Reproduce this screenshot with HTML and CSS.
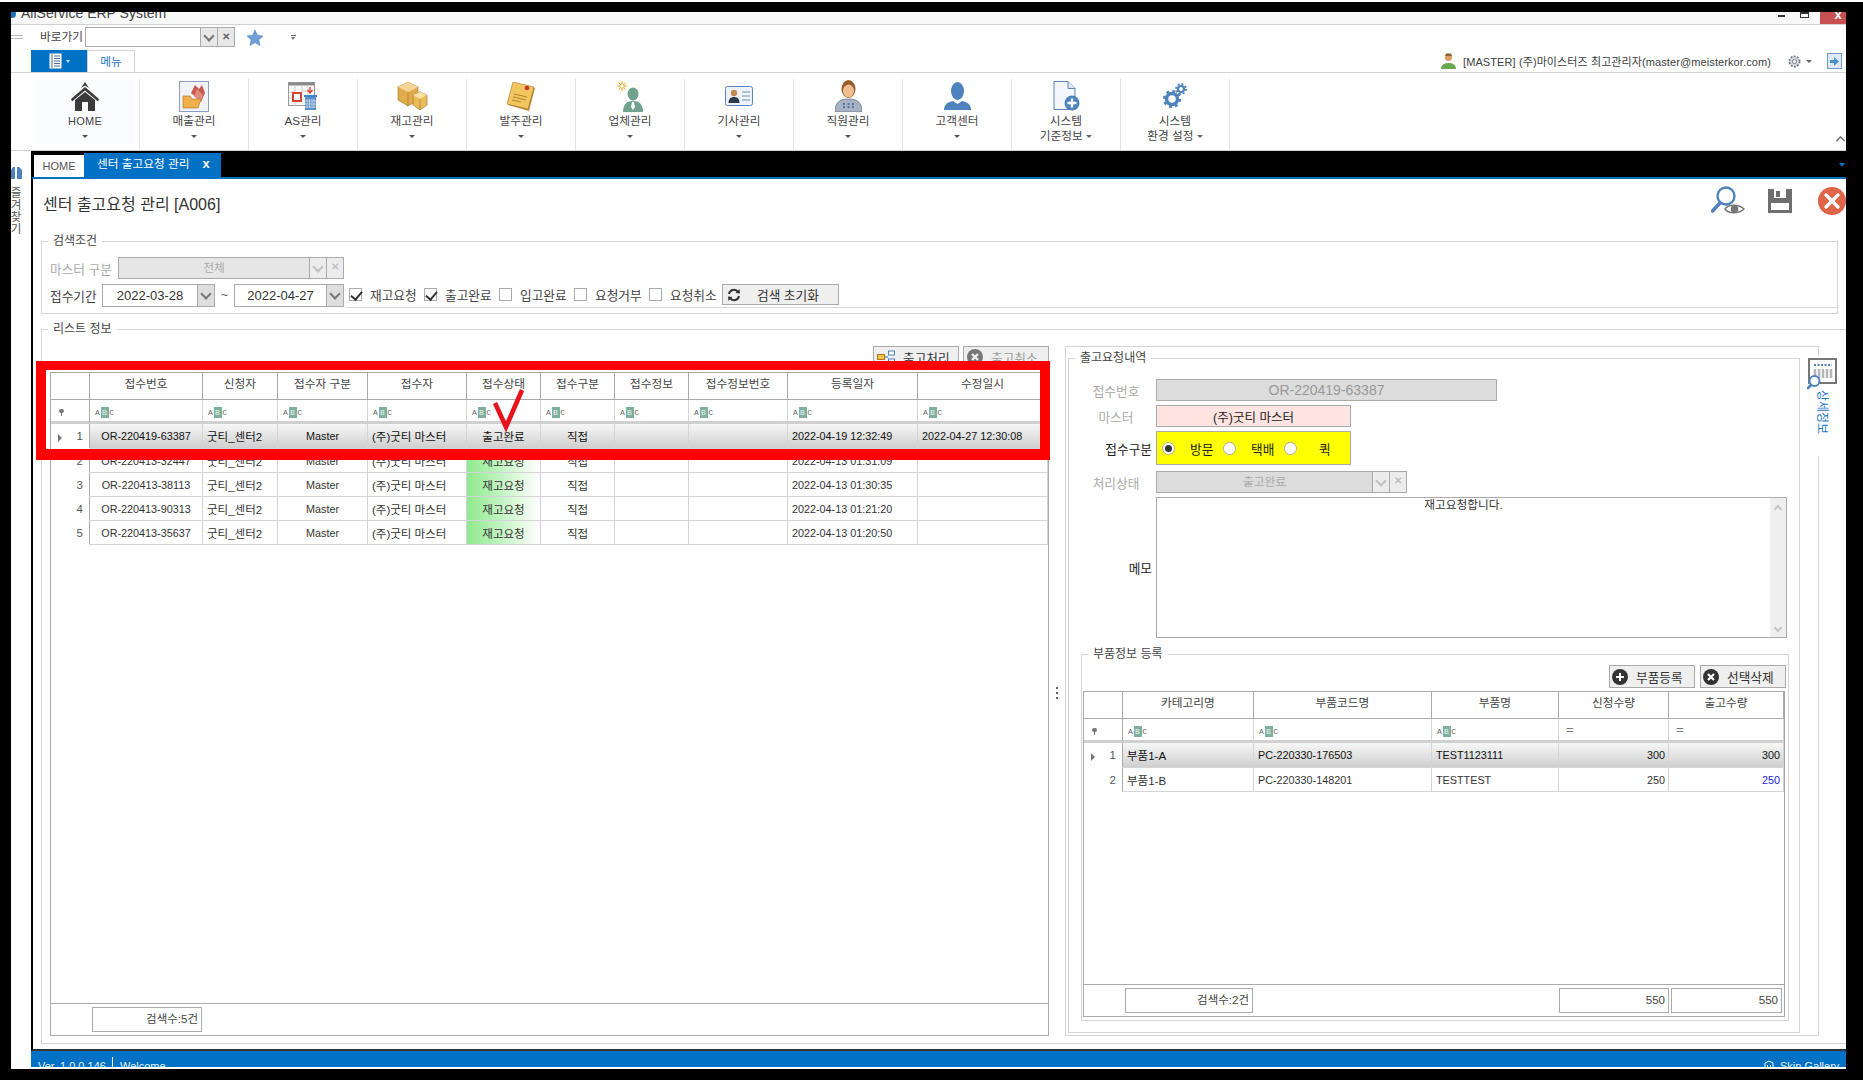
FILE: index.html
```html
<!DOCTYPE html>
<html lang="ko">
<head>
<meta charset="utf-8">
<title>AllService ERP System</title>
<link rel="stylesheet" href="styles.css">
</head>
<body>
<div class="frame">
<div class="app">

  <header class="titlebar">
    <svg class="app-logo" width="6" height="8" viewBox="0 0 6 8"><circle cx="1" cy="3" r="4" fill="#1d6fb8"/></svg>
    <span class="app-name">AllService ERP System</span>
    <span class="win-min"></span>
    <span class="win-restore"></span>
    <span class="win-close">x</span>
  </header>

  <div class="qa-row">
    <span class="qa-grip"></span>
    <span class="qa-label">바로가기</span>
    <div class="qa-combo">
      <span class="combo-text"></span>
      <span class="combo-btn chev"></span>
      <span class="combo-btn combo-x">✕</span>
    </div>
    <svg class="qa-star" width="18" height="18" viewBox="0 0 18 18"><path d="M9 1l2.400 5.400 5.600.6-4.200 3.800 1.200 5.700L9 13.600 4 16.500l1.200-5.700L1 7l5.600-.6z" fill="#6f9fd8" stroke="#4f7fb8" stroke-width=".6"/></svg>
    <span class="qa-more"></span>
  </div>

  <div class="tab-row">
    <span class="file-tab">
      <svg width="13" height="16" viewBox="0 0 13 16"><rect x=".5" y=".5" width="12" height="15" fill="#fff"/><path d="M3 1v14M5 3h6M5 5.500h6M5 8h6M5 10.500h6M5 13h6" stroke="#4a6f90" stroke-width="1"/></svg>
      <i class="file-caret"></i>
    </span>
    <span class="menu-tab">메뉴</span>
    <div class="userbox">
      <svg width="15" height="16" viewBox="0 0 15 16"><circle cx="7.500" cy="4.500" r="3.500" fill="#d9a064"/><path d="M4 3l1-2.500h5L11 3z" fill="#8d6234"/><path d="M0 16c0-4 3-6 7.500-6S15 12 15 16z" fill="#6aa84f"/></svg>
      <span class="user-text">[MASTER] (주)마이스터즈 최고관리자(master@meisterkor.com)</span>
      <svg class="user-gear" width="15" height="15" viewBox="0 0 16 16"><circle cx="8" cy="8" r="5.500" fill="#d5dbe3" stroke="#6a7480" stroke-width="1.800" stroke-dasharray="2 1.500"/><circle cx="8" cy="8" r="2.200" fill="#fff" stroke="#6a7480"/></svg>
      <i class="mini-caret"></i>
      <span class="user-exit"><svg width="9" height="9" viewBox="0 0 9 9"><path d="M0 3h4V0l5 4.500L4 9V6H0z" fill="#4f8fd0"/></svg></span>
    </div>
  </div>

  <nav class="ribbon">
    <div class="rb-item rb-home">
      <span class="rb-icon"><svg width="28" height="29" viewBox="0 0 28 29"><path d="M14 0l-4 6 4-2.500L18 6zM0 17L14 5l14 12-1 2.500L14 8.500 1 19.500z" fill="#3a3a3a"/><path d="M4 18L14 10l10 8v11h-7v-9h-6v9H4z" fill="#3a3a3a"/></svg></span>
      <span class="rb-label rb-latin">HOME</span>
      <i class="rb-caret"></i>
    </div>
    <div class="rb-item">
      <span class="rb-icon"><svg width="30" height="31" viewBox="0 0 30 31"><rect x=".5" y=".5" width="29" height="30" fill="#f1f3fa" stroke="#8d9dc4"/><path d="M12 12l4-8 4 4 3-4 3 8-4 9z" fill="#c9594f"/><path d="M15 15l3-7 6 6-2 7z" fill="#e08a80"/><path d="M4 15h7l2 3h9l-3 9H4z" fill="#f0b04e" stroke="#b57a22" stroke-width=".7"/></svg></span>
      <span class="rb-label">매출관리</span>
      <i class="rb-caret"></i>
    </div>
    <div class="rb-item">
      <span class="rb-icon"><svg width="30" height="28" viewBox="0 0 30 28"><rect x=".5" y=".5" width="26" height="23" fill="#fafafa" stroke="#999"/><rect x=".5" y=".5" width="26" height="3" fill="#8a8a8a"/><path d="M7 4v20M14 4v8M20 4v8M1 10h6M1 16h6M14 9h12" stroke="#ccc"/><rect x="5" y="11" width="8" height="8" fill="#fff" stroke="#d8452c" stroke-width="2"/><path d="M22 5v5m-2.500-2l2.500 3 2.500-3" stroke="#d8452c" fill="none" stroke-width="1.300"/><rect x="16" y="13" width="13" height="2" fill="#3f83c4"/><rect x="17" y="15" width="11" height="13" fill="#5c90c6"/><path d="M19 17v9M21.500 17v9M24 17v9M26 17v9M17 19h11M17 22h11M17 25h11" stroke="#d3e3f2" stroke-width=".7"/></svg></span>
      <span class="rb-label">AS관리</span>
      <i class="rb-caret"></i>
    </div>
    <div class="rb-item">
      <span class="rb-icon"><svg width="31" height="28" viewBox="0 0 31 28"><path d="M1 5l10-5 10 5v13l-10 6-10-6z" fill="#e0ab4a" stroke="#9b7226" stroke-width=".6"/><path d="M1 5l10 5 10-5-10-5z" fill="#f5d694"/><path d="M11 10v14" stroke="#9b7226" stroke-width=".6"/><path d="M16 13l7-3 7 3v10l-7 5-7-5z" fill="#eab95a" stroke="#9b7226" stroke-width=".6"/><path d="M16 13l7 4 7-4-7-3z" fill="#f8dfa4"/><path d="M23 17v11" stroke="#9b7226" stroke-width=".6"/></svg></span>
      <span class="rb-label">재고관리</span>
      <i class="rb-caret"></i>
    </div>
    <div class="rb-item">
      <span class="rb-icon"><svg width="28" height="29" viewBox="0 0 28 29"><path d="M7 1l21 5-6 23L1 23z" fill="#b98a3c"/><path d="M6 0l21 5-6 22L0 22z" fill="#f2c55f" stroke="#a8792a" stroke-width=".6"/><path d="M7 12l13 3M6 15l13 3M5 18l9 2" stroke="#a8792a" stroke-width=".9"/><circle cx="20" cy="6" r="2.300" fill="#c8342c"/></svg></span>
      <span class="rb-label">발주관리</span>
      <i class="rb-caret"></i>
    </div>
    <div class="rb-item">
      <span class="rb-icon"><svg width="27" height="31" viewBox="0 0 27 31"><g stroke="#e8b22e" stroke-width="1"><path d="M5 0v10M0 5h10M1.500 1.500l7 7M8.500 1.500l-7 7"/></g><circle cx="5" cy="5" r="2.300" fill="#fff" stroke="#e8b22e"/><ellipse cx="16" cy="13" rx="5.500" ry="6.500" fill="#6fa38e"/><path d="M6 31c0-8 4-11 10-11s10 3 10 11z" fill="#6fa38e"/><path d="M15 21h2l1 5-2 3-2-3z" fill="#fff"/></svg></span>
      <span class="rb-label">업체관리</span>
      <i class="rb-caret"></i>
    </div>
    <div class="rb-item">
      <span class="rb-icon"><svg width="28" height="20" viewBox="0 0 28 20"><rect x=".5" y=".5" width="27" height="19" rx="2" fill="#eef3fb" stroke="#5a86bd"/><circle cx="9" cy="7" r="3.200" fill="#c58a50"/><path d="M3.500 17c0-4 2-6 5.500-6s5.500 2 5.500 6z" fill="#2d3a4a"/><path d="M17 6h8M17 10h8M17 14h8" stroke="#6a8fb8" stroke-width="1.200"/></svg></span>
      <span class="rb-label">기사관리</span>
      <i class="rb-caret"></i>
    </div>
    <div class="rb-item">
      <span class="rb-icon"><svg width="27" height="32" viewBox="0 0 27 32"><ellipse cx="13.500" cy="9" rx="7" ry="9" fill="#9a5b2a"/><ellipse cx="13.500" cy="11" rx="5.500" ry="6.500" fill="#efbd90"/><path d="M0 32c0-9 4-13 13.500-13S27 23 27 32z" fill="#a7b3c4" stroke="#5f6b7c" stroke-width=".7"/><path d="M9 23v5M13.500 23v5M18 23v5" stroke="#5878a8" stroke-width="2" stroke-dasharray="2 1"/></svg></span>
      <span class="rb-label">직원관리</span>
      <i class="rb-caret"></i>
    </div>
    <div class="rb-item">
      <span class="rb-icon"><svg width="27" height="28" viewBox="0 0 27 28"><ellipse cx="13.500" cy="9" rx="6.500" ry="9" fill="#4d82bd"/><path d="M0 28c0-5 3-8 9-9l4.500 3 4.500-3c6 1 9 4 9 9z" fill="#4d82bd"/></svg></span>
      <span class="rb-label">고객센터</span>
      <i class="rb-caret"></i>
    </div>
    <div class="rb-item">
      <span class="rb-icon"><svg width="27" height="30" viewBox="0 0 27 30"><path d="M1 .5h14l7 7v21H1z" fill="#f3f6fc" stroke="#5a86bd"/><path d="M15 .5v7h7" fill="#dfe8f5" stroke="#5a86bd"/><circle cx="19" cy="22" r="7.500" fill="#4d82bd"/><path d="M19 17.500v9M14.500 22h9" stroke="#fff" stroke-width="2.400"/></svg></span>
      <span class="rb-label">시스템</span>
      <span class="rb-label">기준정보 <i class="mini-caret"></i></span>
    </div>
    <div class="rb-item">
      <span class="rb-icon"><svg width="24" height="26" viewBox="0 0 24 26"><circle cx="9" cy="16" r="5.500" fill="none" stroke="#4d82bd" stroke-width="3.500"/><circle cx="9" cy="16" r="8" fill="none" stroke="#4d82bd" stroke-width="2.200" stroke-dasharray="3 3.300"/><circle cx="18" cy="6" r="3" fill="none" stroke="#4d82bd" stroke-width="2.200"/><circle cx="18" cy="6" r="5" fill="none" stroke="#4d82bd" stroke-width="1.800" stroke-dasharray="2 1.900"/></svg></span>
      <span class="rb-label">시스템</span>
      <span class="rb-label">환경 설정 <i class="mini-caret"></i></span>
    </div>
    <svg class="ribbon-collapse" width="9" height="6" viewBox="0 0 9 6"><path d="M.5 5l4-4 4 4" fill="none" stroke="#777" stroke-width="1.600"/></svg>
  </nav>

  <div class="main">
    <aside class="rail">
      <svg width="11" height="13" viewBox="0 0 11 13"><path d="M0 13V4l2-3h2v12zM6 13V1h2l3 3v9z" fill="#4d82bd"/></svg>
      <span class="rail-text">즐겨찾기</span>
    </aside>

    <div class="workspace">
      <div class="doc-tabs">
        <span class="doc-home">HOME</span>
        <span class="doc-active">센터 출고요청 관리<b class="doc-x">x</b></span>
        <i class="doc-pin"></i>
      </div>

      <main class="content">
        <div class="page-head">
          <h1 class="page-title">센터 출고요청 관리 [A006]</h1>
          <div class="page-actions">
            <svg width="34" height="30" viewBox="0 0 34 30"><circle cx="15" cy="10" r="8.500" fill="none" stroke="#4d82bd" stroke-width="2.400"/><path d="M9 17L1.500 25" stroke="#4d82bd" stroke-width="3.400" stroke-linecap="round"/><path d="M14 23c3-5 14-5 19 0-5 5-16 5-19 0z" fill="#fff" stroke="#777" stroke-width="1.500"/><circle cx="23.500" cy="23" r="3.800" fill="#777"/></svg>
            <svg class="act-save" width="24" height="24" viewBox="0 0 24 24"><path d="M0 0h24v24H0z" fill="#6f6f6f"/><path d="M6 0h12v9H6z" fill="#fff"/><path d="M8 2h4v6H8z" fill="#6f6f6f"/><path d="M3 14h18v7H3z" fill="#fff"/></svg>
            <svg class="act-close" width="28" height="28" viewBox="0 0 28 28"><circle cx="14" cy="14" r="14" fill="#df6448"/><path d="M8 8l12 12M20 8L8 20" stroke="#fff" stroke-width="3.400" stroke-linecap="round"/></svg>
          </div>
        </div>

        <fieldset class="group search-group">
          <legend>검색조건</legend>
          <div class="s-row">
            <span class="s-label s-master">마스터 구분</span>
            <div class="box disabled master-combo">
              <span class="combo-text center">전체</span>
              <span class="combo-btn chev"></span>
              <span class="combo-btn combo-x">✕</span>
            </div>
          </div>
          <div class="s-row">
            <span class="s-label-on s-period">접수기간</span>
            <div class="box date date-a"><span class="combo-text center">2022-03-28</span><span class="combo-btn chev dark"></span></div>
            <span class="tilde">~</span>
            <div class="box date date-b"><span class="combo-text center">2022-04-27</span><span class="combo-btn chev dark"></span></div>
            <div class="checks">
              <span class="chk on"></span><span class="chk-text">재고요청</span>
              <span class="chk on"></span><span class="chk-text">출고완료</span>
              <span class="chk"></span><span class="chk-text">입고완료</span>
              <span class="chk"></span><span class="chk-text">요청거부</span>
              <span class="chk"></span><span class="chk-text">요청취소</span>
              <span class="btn reset-btn">
                <svg width="14" height="14" viewBox="0 0 14 14"><path d="M2 6a5 5 0 0 1 9-2M12 8a5 5 0 0 1-9 2" fill="none" stroke="#333" stroke-width="2"/><path d="M8.500 5L13 5.500 12.500 1zM5.500 9L1 8.500 1.500 13z" fill="#333"/></svg>
                <span class="btn-text">검색 초기화</span>
              </span>
            </div>
          </div>
        </fieldset>

        <fieldset class="group list-group">
          <legend>리스트 정보</legend>
          <div class="list-left">
            <div class="toolbar">
              <span class="btn tool-btn">
                <svg width="18" height="14" viewBox="0 0 18 14"><rect x=".5" y="4.500" width="7" height="5" fill="#f4c542" stroke="#b5761d"/><path d="M8 7h3" stroke="#1d6fb8"/><rect x="11.500" y="1" width="6" height="4" fill="#fff" stroke="#4d82bd"/><rect x="11.500" y="9" width="6" height="4" fill="#fff" stroke="#4d82bd"/></svg>
                <span class="btn-text">출고처리</span>
              </span>
              <span class="btn tool-btn off">
                <svg width="16" height="16" viewBox="0 0 16 16"><circle cx="8" cy="8" r="8" fill="#777"/><path d="M5 5l6 6M11 5l-6 6" stroke="#eee" stroke-width="2.400"/></svg>
                <span class="btn-text">출고취소</span>
              </span>
            </div>

            <div class="grid-wrap grid-main">
              <div class="dg">
                <table class="dt">
                  <colgroup><col class="m0"><col class="m1"><col class="m2"><col class="m3"><col class="m4"><col class="m5"><col class="m6"><col class="m7"><col class="m8"><col class="m9"><col class="m10"></colgroup>
                  <tr class="hd"><th></th><th>접수번호</th><th>신청자</th><th>접수자 구분</th><th>접수자</th><th>접수상태</th><th>접수구분</th><th>접수정보</th><th>접수정보번호</th><th>등록일자</th><th>수정일시</th></tr>
                  <tr class="ft"><td class="ind"><i class="pin"></i></td><td><span class="abc">A<b>B</b>C</span></td><td><span class="abc">A<b>B</b>C</span></td><td><span class="abc">A<b>B</b>C</span></td><td><span class="abc">A<b>B</b>C</span></td><td><span class="abc">A<b>B</b>C</span></td><td><span class="abc">A<b>B</b>C</span></td><td><span class="abc">A<b>B</b>C</span></td><td><span class="abc">A<b>B</b>C</span></td><td><span class="abc">A<b>B</b>C</span></td><td><span class="abc">A<b>B</b>C</span></td></tr>
                  <tr class="r1 sel"><td class="ind"><i class="arrow"></i>1</td><td class="ctr">OR-220419-63387</td><td class="kr">굿티_센터2</td><td class="ctr">Master</td><td class="kr">(주)굿티 마스터</td><td class="ctr kr">출고완료</td><td class="ctr kr">직접</td><td></td><td></td><td>2022-04-19 12:32:49</td><td>2022-04-27 12:30:08</td></tr>
                  <tr class="r"><td class="ind">2</td><td class="ctr">OR-220413-32447</td><td class="kr">굿티_센터2</td><td class="ctr">Master</td><td class="kr">(주)굿티 마스터</td><td class="ctr kr st">재고요청</td><td class="ctr kr">직접</td><td></td><td></td><td>2022-04-13 01:31:09</td><td></td></tr>
                  <tr class="r"><td class="ind">3</td><td class="ctr">OR-220413-38113</td><td class="kr">굿티_센터2</td><td class="ctr">Master</td><td class="kr">(주)굿티 마스터</td><td class="ctr kr st">재고요청</td><td class="ctr kr">직접</td><td></td><td></td><td>2022-04-13 01:30:35</td><td></td></tr>
                  <tr class="r"><td class="ind">4</td><td class="ctr">OR-220413-90313</td><td class="kr">굿티_센터2</td><td class="ctr">Master</td><td class="kr">(주)굿티 마스터</td><td class="ctr kr st">재고요청</td><td class="ctr kr">직접</td><td></td><td></td><td>2022-04-13 01:21:20</td><td></td></tr>
                  <tr class="r"><td class="ind">5</td><td class="ctr">OR-220413-35637</td><td class="kr">굿티_센터2</td><td class="ctr">Master</td><td class="kr">(주)굿티 마스터</td><td class="ctr kr st">재고요청</td><td class="ctr kr">직접</td><td></td><td></td><td>2022-04-13 01:20:50</td><td></td></tr>
                </table>
              </div>
              <div class="dg-foot foot-main">
                <span class="sum sum-count">검색수:5건</span>
              </div>
              <div class="redbox">
                <svg class="redcheck" width="34" height="44" viewBox="0 0 34 44"><path d="M3 15l11 24L30 2" fill="none" stroke="#e8121a" stroke-width="4.600" stroke-linejoin="miter"/></svg>
              </div>
            </div>
          </div>

          <div class="splitter"><i></i><i></i><i></i></div>

          <section class="detail">
            <fieldset class="group detail-group">
              <legend>출고요청내역</legend>
              <div class="f-row f-r1">
                <span class="f-label">접수번호</span>
                <span class="box ro ro-no">OR-220419-63387</span>
              </div>
              <div class="f-row f-r2">
                <span class="f-label">마스터</span>
                <span class="box pink">(주)굿티 마스터</span>
              </div>
              <div class="f-row f-r3">
                <span class="f-label on">접수구분</span>
                <div class="box yellow">
                  <span class="radio checked"></span><span class="rd-text t1">방문</span>
                  <span class="radio"></span><span class="rd-text t2">택배</span>
                  <span class="radio"></span><span class="rd-text t3">퀵</span>
                </div>
              </div>
              <div class="f-row f-r4">
                <span class="f-label">처리상태</span>
                <div class="box disabled status-combo">
                  <span class="combo-text center">출고완료</span>
                  <span class="combo-btn chev"></span>
                  <span class="combo-btn combo-x">✕</span>
                </div>
              </div>
              <div class="f-row f-r5">
                <span class="f-label on">메모</span>
                <div class="box memo">
                  <div class="memo-text">재고요청합니다.</div>
                  <div class="memo-scroll"><span class="sc-up"></span><span class="sc-down"></span></div>
                </div>
              </div>

              <fieldset class="group parts-group">
                <legend>부품정보 등록</legend>
                <div class="parts-tools">
                  <span class="btn part-btn">
                    <svg width="16" height="16" viewBox="0 0 16 16"><circle cx="8" cy="8" r="8" fill="#333"/><path d="M8 4v8M4 8h8" stroke="#fff" stroke-width="2"/></svg>
                    <span class="btn-text">부품등록</span>
                  </span>
                  <span class="btn part-btn">
                    <svg width="16" height="16" viewBox="0 0 16 16"><circle cx="8" cy="8" r="8" fill="#333"/><path d="M5 5l6 6M11 5l-6 6" stroke="#fff" stroke-width="2.200"/></svg>
                    <span class="btn-text">선택삭제</span>
                  </span>
                </div>
                <div class="grid-wrap grid-parts">
                  <div class="dg">
                    <table class="dt">
                      <colgroup><col class="p0"><col class="p1"><col class="p2"><col class="p3"><col class="p4"><col class="p5"></colgroup>
                      <tr class="hd"><th></th><th>카테고리명</th><th>부품코드명</th><th>부품명</th><th>신청수량</th><th>출고수량</th></tr>
                      <tr class="ft"><td class="ind"><i class="pin"></i></td><td><span class="abc">A<b>B</b>C</span></td><td><span class="abc">A<b>B</b>C</span></td><td><span class="abc">A<b>B</b>C</span></td><td><span class="eq">=</span></td><td><span class="eq">=</span></td></tr>
                      <tr class="r1 sel"><td class="ind"><i class="arrow"></i>1</td><td class="kr">부품1-A</td><td>PC-220330-176503</td><td>TEST1123111</td><td class="num">300</td><td class="num">300</td></tr>
                      <tr class="r"><td class="ind">2</td><td class="kr">부품1-B</td><td>PC-220330-148201</td><td>TESTTEST</td><td class="num">250</td><td class="num blue">250</td></tr>
                    </table>
                  </div>
                  <div class="dg-foot foot-parts">
                    <span class="sum sum-parts">검색수:2건</span>
                    <span class="sum sum-q1">550</span>
                    <span class="sum sum-q2">550</span>
                  </div>
                </div>
              </fieldset>
            </fieldset>

            <div class="sidetab">
              <svg width="30" height="32" viewBox="0 0 30 32"><rect x="2" y="1" width="27" height="24" fill="#fff" stroke="#777" stroke-width="2"/><path d="M7 7h18" stroke="#4d82bd" stroke-width="2" stroke-dasharray="2 1.500"/><path d="M8 11v9M12 11v9M16 11v9M20 11v9M24 11v9" stroke="#b5b5b5" stroke-width="2.500"/><circle cx="7.500" cy="23" r="5" fill="#fff" stroke="#4d82bd" stroke-width="2"/><path d="M4 27l-3 3" stroke="#4d82bd" stroke-width="2.600" stroke-linecap="round"/></svg>
              <span class="sidetab-text">상세정보</span>
            </div>
          </section>
        </fieldset>
      </main>

      <footer class="statusbar">
        <span class="ver">Ver. 1.0.0.146</span>
        <span class="st-welcome">Welcome</span>
        <svg class="skin-icon" width="10" height="12" viewBox="0 0 10 12"><path d="M1 3l4-2 4 2v9H1zM3.500 5v7M6.500 5v7" fill="none" stroke="#fff"/></svg>
        <span class="skin">Skin Gallery</span>
      </footer>
    </div>
  </div>
</div>
</div>
</body>
</html>
```
FILE: styles.css
```css
* { box-sizing: border-box; }
html, body { margin: 0; padding: 0; background: #fff; }
body {
  width: 1863px;
  height: 1080px;
  overflow: hidden;
  font-family: "Liberation Sans", "Noto Sans CJK KR", sans-serif;
  font-size: 11px;
  color: #333;
  padding-top: 2px;
}
i { font-style: normal; }

.frame {
  height: 1078px;
  background: #000;
  padding: 10px 17px 11px 11px;
}
.app {
  width: 1835px;
  height: 1057px;
  background: #fff;
  display: flex;
  flex-direction: column;
  overflow: hidden;
}

/* title bar */
.titlebar {
  flex: 0 0 13px;
  height: 13px;
  background: #f8f8f8;
  border-bottom: 1px solid #d2d2d2;
  display: flex;
  align-items: flex-end;
  padding-bottom: 3px;
  overflow: hidden;
}
.app-logo { flex: none; margin-right: 4px; margin-bottom: 2px; }
.app-name { font-size: 14px; line-height: 16px; color: #444; }
.win-min { width: 7px; height: 2px; background: #333; margin-left: auto; margin-bottom: 4px; }
.win-restore { width: 9px; height: 6px; border: 1px solid #333; border-top-width: 2px; margin-left: 15px; margin-right: 11px; margin-bottom: 3px; }
.win-close {
  width: 26px;
  height: 12px;
  margin-bottom: -3px;
  padding-left: 10px;
  background: #c75050;
  color: #fff;
  font-weight: bold;
  font-size: 13px;
  line-height: 6px;
  text-align: center;
}

/* quick access */
.qa-row {
  flex: 0 0 25px;
  display: flex;
  align-items: center;
}
.qa-grip { width: 12px; height: 4px; border-top: 1px solid #bbb; border-bottom: 1px solid #bbb; margin-right: 17px; margin-top: -1px; }
.qa-label { width: 45px; font-size: 11.700px; color: #444; white-space: nowrap; margin-top: -4px; }
.qa-combo {
  width: 150px;
  height: 20px;
  border: 1px solid #aaa;
  display: flex;
  margin-top: -1px;
}
.combo-text { flex: 1; }
.center { text-align: center; }
.combo-btn {
  width: 17px;
  flex: none;
  background: #e8e8e8;
  border-left: 1px solid #aaa;
  color: #666;
  font-size: 10px;
  font-weight: bold;
  text-align: center;
}
.chev { display: flex; align-items: center; justify-content: center; }
.chev::before {
  content: "";
  width: 6px;
  height: 6px;
  border: solid #777;
  border-width: 0 2px 2px 0;
  transform: rotate(45deg);
  margin-top: -3px;
}
.combo-x { line-height: 18px; }
.qa-star { margin-left: 11px; }
.qa-more { width: 5px; height: 4px; margin-left: 27px; margin-top: -2px; border-top: 1px solid #666; position: relative; }
.qa-more::after { content: ""; position: absolute; left: 0; top: 1px; border: 2.500px solid transparent; border-top: 3px solid #777; border-bottom: 0; }

/* tabs row */
.tab-row {
  flex: 0 0 23px;
  display: flex;
  align-items: stretch;
  padding-left: 20px;
  border-bottom: 1px solid #d2d2d2;
  overflow: hidden;
}
.file-tab {
  width: 56px;
  background: #0071c5;
  display: flex;
  align-items: center;
  justify-content: center;
  gap: 4px;
}
.file-caret { width: 0; height: 0; border: 2px solid transparent; border-top: 3px solid #cfe3f5; border-bottom: 0; }
.menu-tab {
  width: 48px;
  border: 1px solid #d2d2d2;
  border-bottom: 0;
  color: #1b78c6;
  font-size: 11.700px;
  text-align: center;
  line-height: 21px;
  margin-bottom: -1px;
  background: #fff;
}
.userbox {
  margin-left: auto;
  display: flex;
  align-items: center;
  padding-right: 4px;
}
.user-text { font-size: 11px; color: #3d3d3d; margin-left: 7px; width: 307px; white-space: nowrap; letter-spacing: .1px; }
.user-gear { margin-left: 17px; }
.mini-caret { display: inline-block; width: 0; height: 0; border: 3px solid transparent; border-top: 3px solid #666; border-bottom: 0; vertical-align: middle; }
.userbox .mini-caret { margin-left: 4px; }
.user-exit {
  width: 15px;
  height: 16px;
  margin-left: 15px;
  background: #dfeaf7;
  border: 1px solid #6f9bcb;
  display: flex;
  align-items: center;
  justify-content: center;
}

/* ribbon */
.ribbon {
  flex: 0 0 78px;
  display: flex;
  padding-left: 20px;
  border-bottom: 1px solid #d2d2d2;
  position: relative;
}
.rb-item {
  width: 109px;
  height: 71px;
  margin-top: 6px;
  border-right: 1px solid #e2e2e2;
  display: flex;
  flex-direction: column;
  align-items: center;
}
.rb-home { background: linear-gradient(#fbfcff, #fbfcff) 4px 0 / 100px 65px no-repeat; }
.rb-icon { height: 34px; display: flex; align-items: center; justify-content: center; }
.rb-label { font-size: 11.700px; line-height: 15px; color: #444; white-space: nowrap; }
.rb-latin { font-size: 11px; letter-spacing: .3px; line-height: 17px; }
.rb-caret { width: 0; height: 0; border: 3px solid transparent; border-top: 3px solid #555; border-bottom: 0; margin-top: 7px; }
.rb-latin + .rb-caret { margin-top: 5px; }
.ribbon-collapse { position: absolute; right: 1px; top: 63px; }

/* main */
.main { flex: 1; display: flex; min-height: 0; }
.rail {
  width: 20px;
  flex: none;
  display: flex;
  flex-direction: column;
  align-items: flex-start;
  padding-top: 15px;
  overflow: hidden;
}
.rail-text {
  writing-mode: vertical-rl;
  text-orientation: upright;
  font-size: 11.500px;
  letter-spacing: .5px;
  color: #555;
  margin: 8px 0 0 -3px;
  line-height: 14px;
}
.workspace { width: 1815px; display: flex; flex-direction: column; min-width: 0; }
.doc-tabs {
  flex: 0 0 26px;
  background: #000;
  display: flex;
  align-items: flex-end;
  padding-left: 3px;
  position: relative;
}
.doc-home {
  width: 50px;
  height: 22px;
  background: #fff;
  color: #555;
  font-size: 11px;
  line-height: 23px;
  text-align: center;
}
.doc-active {
  width: 137px;
  height: 24px;
  background: #0071c5;
  color: #fff;
  font-size: 11.700px;
  line-height: 22px;
  padding-left: 13px;
  white-space: nowrap;
}
.doc-x { font-size: 13px; margin-left: 13px; }
.doc-pin { position: absolute; right: 1px; top: 12px; border: 3px solid transparent; border-top: 4px solid #0071c5; }

.content {
  flex: 0 0 874px;
  height: 874px;
  border-top: 2px solid #0071c5;
  border-left: 2px solid #000;
  border-bottom: 2px solid #333;
  background: #fff;
  overflow: hidden;
  min-height: 0;
}
.page-head {
  height: 55px;
  padding: 7px 0 0 10px;
  display: flex;
  justify-content: space-between;
  align-items: flex-start;
}
.page-title { margin: 9px 0 0; font-size: 16px; font-weight: normal; line-height: 20px; color: #333; }
.page-actions { display: flex; align-items: center; height: 30px; }
.act-save { margin-left: 23px; }
.act-close { margin-left: 26px; }

/* groups */
.group {
  margin: 0;
  min-width: 0;
  padding: 0;
  border: 1px solid #d4d4d4;
}
.group > legend {
  padding: 0 5px;
  font-size: 12px;
  line-height: 14px;
  color: #444;
}
.search-group > legend, .list-group > legend { margin-left: -2px; }
.detail-group > legend { margin-left: 5px; }
.parts-group > legend { margin-left: 5px; }
.search-group {
  margin: 0 8px 8px 8px;
  height: 80px;
  padding: 9px 0 0 8px;
}
.s-row { display: flex; align-items: center; height: 22px; }
.s-row + .s-row { margin-top: 5px; }
.s-label { color: #aaa; font-size: 12.700px; white-space: nowrap; }
.s-label-on { color: #444; font-size: 12.700px; white-space: nowrap; }
.s-master { width: 68px; }
.s-period { width: 52px; }
.box { border: 1px solid #aaa; display: flex; }
.disabled { background: #e6e6e6; color: #aaa; }
.master-combo { width: 226px; height: 22px; font-size: 11.700px; line-height: 20px; }
.combo-text { font-size: inherit; }
.master-combo .combo-btn, .status-combo .combo-btn { color: #c0c0c0; background: #ececec; }
.master-combo .chev::before, .status-combo .chev::before { border-color: #c0c0c0; }
.date { height: 23px; font-size: 13px; line-height: 21px; background: #fff; color: #333; }
.date-a { width: 113px; }
.date-b { width: 110px; }
.dark { background: #dedede; color: #666; }
.tilde { width: 19px; text-align: center; color: #555; font-size: 12px; }
.checks {
  flex: 1;
  height: 24px;
  display: flex;
  align-items: center;
  border-bottom: 1px solid #d8d8d8;
  margin-left: 2px;
  padding-left: 3px;
  margin-top: 2px;
  padding-bottom: 2px;
}
.chk {
  width: 13px;
  height: 13px;
  border: 1px solid #aaa;
  background: #fff;
  position: relative;
  flex: none;
}
.chk.on::after {
  content: "";
  position: absolute;
  left: 3px;
  top: 0;
  width: 5px;
  height: 9px;
  border: solid #333;
  border-width: 0 2px 2px 0;
  transform: rotate(40deg);
}
.chk-text { width: 62px; padding-left: 8px; font-size: 12.700px; white-space: nowrap; color: #444; }
.btn {
  display: flex;
  align-items: center;
  background: #efefef;
  border: 1px solid #aaa;
  color: #333;
  font-size: 12.700px;
  white-space: nowrap;
}
.reset-btn { width: 117px; height: 21px; margin-left: -2px; padding-left: 4px; }
.reset-btn .btn-text { margin-left: 16px; }

.list-group {
  width: 1813px;
  height: 722px;
  margin-left: 8px;
  padding: 10px 0 0 8px;
  display: flex;
  align-items: flex-start;
}
.list-left { width: 999px; flex: none; }
.toolbar { display: flex; justify-content: flex-end; gap: 4px; height: 26px; }
.tool-btn { width: 86px; height: 22px; padding-left: 3px; }
.tool-btn .btn-text { margin-left: 8px; }
.tool-btn.off { color: #999; padding-left: 3px; }

/* data grids */
.grid-wrap {
  position: relative;
  border: 1px solid #aaa;
  display: flex;
  flex-direction: column;
  background: #fff;
}
.grid-main { height: 664px; }
.dg { flex: 1; border-bottom: 1px solid #aaa; min-height: 0; }
.dt { border-collapse: separate; border-spacing: 0; table-layout: fixed; width: 100%; }
.m0 { width: 39px; } .m1 { width: 113px; } .m2 { width: 75px; } .m3 { width: 90px; }
.m4 { width: 99px; } .m5 { width: 74px; } .m6 { width: 74px; } .m7 { width: 74px; }
.m8 { width: 99px; } .m9 { width: 130px; } .m10 { width: 130px; }
.p0 { width: 39px; } .p1 { width: 131px; } .p2 { width: 178px; } .p3 { width: 127px; } .p4 { width: 110px; } .p5 { width: 115px; }
.dt th, .dt td { padding: 0; overflow: hidden; white-space: nowrap; }
.hd th {
  height: 27px;
  font-weight: normal;
  font-size: 11.700px;
  color: #444;
  border-right: 1px solid #aaa;
  border-bottom: 1px solid #aaa;
  padding-bottom: 8px;
}
.ft td {
  height: 24px;
  border-right: 1px solid #d4d4d4;
  border-bottom: 3px solid #d0d0d0;
  padding-left: 5px;
}
.r td, .r1 td {
  font-size: 10.800px;
  color: #333;
  padding-left: 4px;
  border-right: 1px solid #d4d4d4;
  border-bottom: 1px solid #d4d4d4;
}
.r td { height: 24px; }
.r1 td { height: 25px; }
.r1 td { color: #111; }
.sel td:not(.ind) { background: linear-gradient(#f7f7f7, #cfcfcf); }
.dt td.ind {
  text-align: right;
  padding-right: 6px;
  color: #555;
  font-size: 11.500px;
  border-right: 1px solid #aaa;
  border-bottom-color: transparent;
  background: #fff;
}
.dt .ft td.ind { border-bottom: 3px solid #d0d0d0; text-align: left; padding-left: 8px; }
.dt td.ctr { text-align: center; padding-left: 0; }
.kr { font-size: 11.500px !important; }
.st { background: linear-gradient(to right, #8eea8e, #fff); }
.num { text-align: right; padding-right: 3px !important; }
.blue { color: #1a1ae0 !important; }
.arrow {
  float: left;
  margin: 4px 0 0 3px;
  width: 0;
  height: 0;
  border: 4px solid transparent;
  border-left: 4px solid #777;
  border-right: 0;
}
.pin {
  display: inline-block;
  width: 5px;
  height: 4px;
  border-radius: 3px;
  background: #777;
  position: relative;
  vertical-align: 2px;
}
.pin::after { content: ""; position: absolute; left: 2px; top: 3px; width: 1px; height: 4px; background: #777; }
.abc { font-family: "Liberation Mono", monospace; font-size: 8px; color: #666; display: inline-flex; letter-spacing: .8px; }
.abc b { background: #7fb09f; color: #e8f3ee; font-weight: normal; padding: 1px 1.500px; margin: -1px 0; }
.eq { font-size: 13px; color: #777; padding-left: 2px; }
.dg-foot { height: 31px; display: flex; align-items: flex-start; padding-top: 3px; flex: none; }
.foot-main { padding-left: 41px; }
.sum {
  height: 25px;
  border: 1px solid #aaa;
  text-align: right;
  line-height: 22px;
  padding-right: 3px;
  font-size: 11.500px;
  color: #444;
  display: block;
}
.sum-count { width: 110px; }

.redbox {
  position: absolute;
  left: -15px;
  top: -12px;
  width: 1014px;
  height: 99px;
  border: solid #f00;
  border-width: 9px 10px 11px 10px;
  pointer-events: none;
}
.redcheck { position: absolute; left: 446px; top: 18px; }

.splitter {
  width: 16px;
  flex: none;
  align-self: center;
  display: flex;
  flex-direction: column;
  align-items: center;
  gap: 3px;
  margin-top: -4px;
}
.splitter i { width: 2px; height: 2px; background: #666; }

/* detail panel */
.detail {
  width: 754px;
  height: 690px;
  flex: none;
  border: 1px solid #d4d4d4;
  padding: 4px 18px 2px 2px;
  position: relative;
}
.detail-group { height: 682px; width: 732px; padding: 14px 0 0 1px; }
.f-row { display: flex; width: 100%; }
.f-label {
  width: 86px;
  flex: none;
  padding: 0 16px 0 22px;
  font-size: 12.700px;
  color: #aaa;
  text-align: center;
  white-space: nowrap;
  align-self: center;
}
.f-label.on { color: #222; text-align: right; padding: 0 4px 0 0; }
.f-r1 { height: 22px; }
.f-r2 { height: 22px; margin-top: 4px; }
.f-r3 { height: 34px; margin-top: 4px; }
.f-r4 { height: 22px; margin-top: 6px; }
.f-r5 { height: 141px; margin-top: 4px; }
.ro {
  width: 341px;
  background: #dcdcdc;
  color: #999;
  font-size: 14px;
  justify-content: center;
  align-items: center;
}
.pink {
  width: 195px;
  background: #ffe4e1;
  color: #222;
  font-size: 12.500px;
  justify-content: center;
  align-items: center;
}
.yellow {
  width: 195px;
  background: #ff0;
  color: #222;
  align-items: center;
  font-size: 12.700px;
  padding-left: 5px;
}
.radio {
  width: 13px;
  height: 13px;
  border: 1px solid #aaa;
  border-radius: 50%;
  background: #fff;
  flex: none;
  display: flex;
  align-items: center;
  justify-content: center;
}
.checked::after { content: ""; width: 7px; height: 7px; border-radius: 50%; background: #333; }
.rd-text { white-space: nowrap; }
.t1 { width: 48px; padding-left: 15px; }
.t2 { width: 48px; padding-left: 15px; }
.t3 { padding-left: 22px; }
.status-combo { width: 251px; background: #dcdcdc; font-size: 11.700px; line-height: 20px; }
.memo { width: 631px; }
.memo-text { flex: 1; text-align: center; font-size: 11.700px; line-height: 14px; color: #333; }
.memo-scroll {
  width: 16px;
  background: #efefef;
  display: flex;
  flex-direction: column;
  justify-content: space-between;
  align-items: center;
  padding: 8px 0 6px;
}
.memo-scroll span { width: 6px; height: 6px; border: solid #c4c4c4; border-width: 0 2px 2px 0; }
.sc-up { transform: rotate(-135deg); }
.sc-down { transform: rotate(45deg); }
.parts-group {
  width: 708px;
  height: 374px;
  margin: 9px 0 0 11px;
  padding: 4px 2px 3px 1px;
  display: flex;
  flex-direction: column;
}
.parts-tools { display: flex; justify-content: flex-end; gap: 5px; height: 26px; flex: none; }
.part-btn { width: 86px; height: 23px; padding-left: 2px; }
.part-btn .btn-text { margin-left: 8px; }
.grid-parts { width: 702px; height: 326px; flex: none; }
.foot-parts { padding-left: 41px; padding-right: 2px; }
.sum-parts { width: 128px; }
.sum-q1 { width: 110px; margin-left: auto; }
.sum-q2 { width: 111px; margin-left: 2px; }

.sidetab {
  position: absolute;
  left: 740px;
  top: 8px;
  width: 32px;
  height: 101px;
  background: #fff;
  display: flex;
  flex-direction: column;
  align-items: center;
  padding-top: 3px;
}
.sidetab-text {
  writing-mode: vertical-rl;
  text-orientation: sideways;
  color: #1b78c6;
  font-size: 12px;
  line-height: 14px;
}

/* status */
.statusbar {
  flex: 0 0 16px;
  height: 16px;
  background: #0071c5;
  color: #e8f2fb;
  display: flex;
  align-items: flex-start;
  padding: 9px 0 0 7px;
  overflow: hidden;
  font-size: 11px;
  line-height: 13px;
}
.ver { width: 75px; height: 20px; border-right: 1px solid #fff; margin-top: -3px; padding-top: 3px; }
.st-welcome { margin-left: 7px; }
.skin-icon { margin-left: auto; margin-right: 6px; }
.skin { padding-right: 4px; width: 66px; white-space: nowrap; }
```
